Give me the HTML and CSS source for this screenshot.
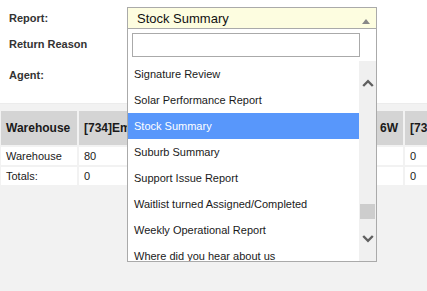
FILE: index.html
```html
<!DOCTYPE html>
<html>
<head>
<meta charset="utf-8">
<link rel="stylesheet" href="styles.css">
</head>
<body>
<div class="page">
  <form class="filters">
    <div class="row row-report">
      <label class="lbl">Report:</label>
      <div class="combo">
        <div class="combo-head">
          <span class="combo-value">Stock Summary</span>
          <svg class="caret" width="8" height="5" viewBox="0 0 8 5"><path d="M0 5 L4 0 L8 5 Z" fill="#888"/></svg>
        </div>
        <div class="combo-drop">
          <input class="combo-search" type="text">
          <div class="combo-body">
            <ul class="combo-list">
              <li>Signature Review</li>
              <li>Solar Performance Report</li>
              <li class="active">Stock Summary</li>
              <li>Suburb Summary</li>
              <li>Support Issue Report</li>
              <li>Waitlist turned Assigned/Completed</li>
              <li>Weekly Operational Report</li>
              <li>Where did you hear about us</li>
            </ul>
            <div class="scroll">
              <svg class="chev chev-up" width="12" height="8" viewBox="0 0 12 8"><path d="M1.2 7 L6 2.2 L10.8 7" fill="none" stroke="#606060" stroke-width="2.4"/></svg>
              <div class="thumb"></div>
              <svg class="chev chev-down" width="12" height="8" viewBox="0 0 12 8"><path d="M1.2 1 L6 5.8 L10.8 1" fill="none" stroke="#606060" stroke-width="2.4"/></svg>
            </div>
          </div>
        </div>
      </div>
    </div>
    <div class="row row-reason"><label class="lbl">Return Reason</label></div>
    <div class="row row-agent"><label class="lbl">Agent:</label></div>
  </form>
  <section class="results">
    <table class="grid">
      <colgroup>
        <col class="c1"><col class="c2"><col class="c3"><col class="c4">
      </colgroup>
      <thead>
        <tr>
          <th>Warehouse</th>
          <th>[734]Emerald Plains</th>
          <th class="th-right">[736]Woolworths Store 6W</th>
          <th>[737]Northgate</th>
        </tr>
      </thead>
      <tbody>
        <tr><td>Warehouse</td><td>80</td><td></td><td>0</td></tr>
        <tr><td>Totals:</td><td>0</td><td></td><td>0</td></tr>
      </tbody>
    </table>
  </section>
</div>
</body>
</html>
```

FILE: styles.css
```css
html, body {
  margin: 0;
  padding: 0;
  height: 100%;
  background: #f2f2f2;
  font-family: "Liberation Sans", Arial, sans-serif;
  overflow: hidden;
}

.page {
  min-height: 100%;
  display: flex;
  flex-direction: column;
}

.filters {
  background: #ffffff;
  padding: 7px 0 17px 9px;
  margin: 0;
  display: flex;
  flex-direction: column;
  position: relative;
  z-index: 2;
}

.row {
  display: flex;
  align-items: flex-start;
  height: 22px;
}

.row-reason { margin-top: 4px; }
.row-agent { margin-top: 9px; }

.lbl {
  width: 118px;
  flex: none;
  font-size: 11px;
  font-weight: bold;
  color: #333333;
  line-height: 22px;
  white-space: nowrap;
}

.combo {
  position: relative;
  width: 250px;
  height: 22px;
}

.combo-head {
  box-sizing: border-box;
  width: 250px;
  height: 22px;
  border: 1px solid #aaaaaa;
  background: #fdfde0;
  display: flex;
  justify-content: space-between;
  align-items: flex-start;
  padding: 0 6px 0 9px;
}

.combo-value {
  font-size: 13px;
  line-height: 18px;
  padding-top: 2px;
  color: #111111;
  white-space: nowrap;
}

.caret {
  margin-top: 11px;
  display: block;
}

.combo-drop {
  position: absolute;
  top: 100%;
  left: 0;
  box-sizing: border-box;
  width: 250px;
  background: #ffffff;
  border: 1px solid #aaaaaa;
  border-top: none;
  padding-top: 4px;
}

.combo-search {
  display: block;
  box-sizing: border-box;
  width: 228px;
  height: 24px;
  margin: 0 0 4px 4px;
  padding: 0;
  border: 1px solid #aaaaaa;
  background: #ffffff;
  outline: none;
}

.combo-body {
  display: flex;
  height: 200px;
  overflow: hidden;
}

.combo-list {
  flex: 1;
  margin: 0;
  padding: 0;
  list-style: none;
}

.combo-list li {
  height: 26px;
  line-height: 26px;
  padding-left: 6px;
  font-size: 11px;
  color: #1a1a1a;
  white-space: nowrap;
}

.combo-list li.active {
  background: #5897fb;
  color: #ffffff;
}

.scroll {
  width: 17px;
  flex: none;
  background: #f0f0f0;
  display: flex;
  flex-direction: column;
  align-items: center;
  padding-top: 18px;
}

.chev { display: block; }

.thumb {
  width: 15px;
  height: 15px;
  background: #cdcdcd;
  margin-top: 117px;
}

.chev-down { margin-top: 16px; }

.results {
  flex: 1;
  border-top: 1px solid #ececec;
  padding-top: 5px;
  overflow: hidden;
}

.grid {
  table-layout: fixed;
  width: 468px;
  border-collapse: separate;
  border-spacing: 2px;
  margin-left: -1px;
}

.c1 { width: 76px; }
.c2 { width: 150px; }
.c3 { width: 172px; }
.c4 { width: 60px; }

.grid th {
  background: #d4d4d4;
  height: 34px;
  padding: 0 5px;
  font-size: 12px;
  font-weight: bold;
  color: #1a1a1a;
  text-align: left;
  white-space: nowrap;
  overflow: hidden;
}

.grid th.th-right { text-align: right; }

.grid td {
  background: #ffffff;
  height: 18px;
  padding: 0 5px;
  font-size: 11px;
  color: #1a1a1a;
  white-space: nowrap;
  overflow: hidden;
}
```
